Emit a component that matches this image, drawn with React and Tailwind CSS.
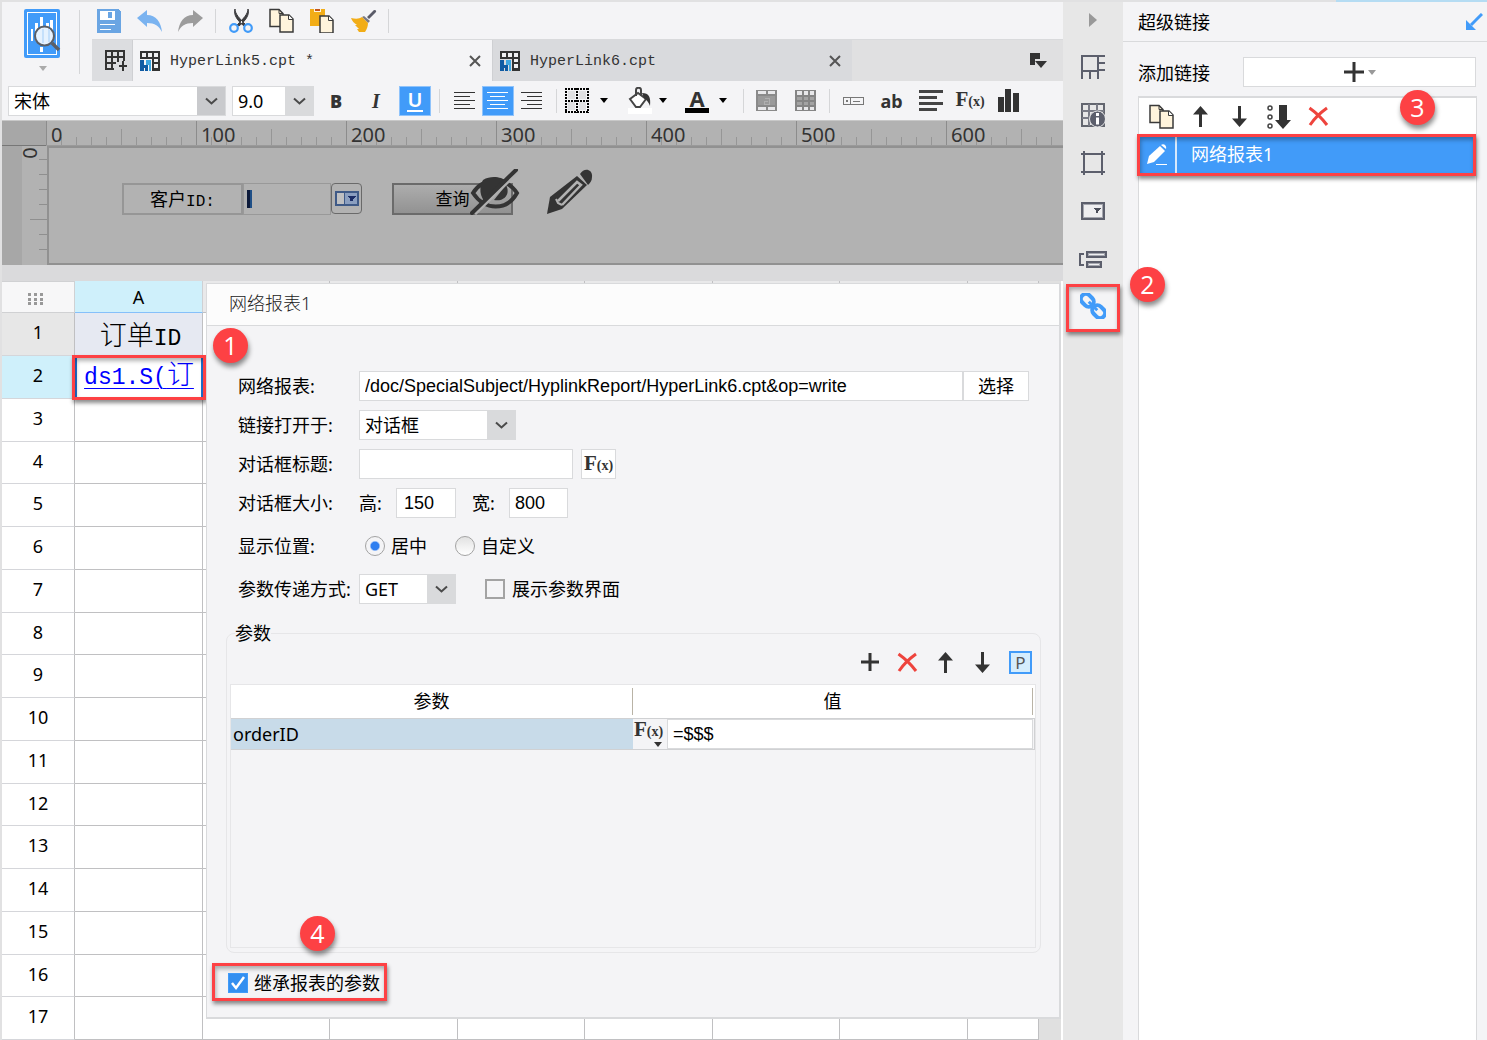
import React from "react";

const SONG = "font-['Liberation_Mono','Noto_Sans_CJK_SC',monospace]";
const ARIAL = "font-['Liberation_Sans','Noto_Sans_CJK_SC',sans-serif]";

/* ---------- icons ---------- */

const Svg = ({ w, h, children, className = "", crisp }) => (
  <svg
    width={w}
    height={h}
    viewBox={`0 0 ${w} ${h}`}
    fill="none"
    aria-hidden="true"
    shapeRendering={crisp ? "crispEdges" : "auto"}
    className={`shrink-0 ${className}`}
  >
    {children}
  </svg>
);

const PreviewIcon = () => (
  <Svg w={37} h={50}>
    <rect width="36" height="49" rx="2" fill="#419bf9" />
    <rect x="3.5" y="3.5" width="29" height="42" stroke="#fff" />
    <path d="M7 20h2v12H7zM11 14h3v18h-3zM16 8h3v10h-3zM22 14h3v4h-3zM26 11h3v16h-3zM16 38h3v5h-3z" fill="#fff" />
    <circle cx="20.500" cy="27" r="9.500" fill="#e6f2fe" stroke="#5b5f66" strokeWidth="2" />
    <path d="M18 20h2v14h-2zM24 20h2v13h-2z" fill="#c5e0fb" />
    <path d="M28 34l7 7" stroke="#5b5f66" strokeWidth="3.500" />
  </Svg>
);

const SaveIcon = () => (
  <Svg w={24} h={24} crisp>
    <path d="M0 0h21l3 3v21H0z" fill="#6aa5e3" />
    <path d="M3 2h15v9H3zM3 15h15v1H3zM3 20h11v1H3z" fill="#fff" />
    <path d="M11 3h4v6h-4z" fill="#6aa5e3" />
  </Svg>
);

const UndoIcon = () => (
  <Svg w={25} h={24}>
    <path d="M0 9L10 1v5c9 0 14 7 15 17-3-6-7-9-15-9v4z" fill="#7ab3f0" />
  </Svg>
);

const RedoIcon = () => (
  <Svg w={25} h={24}>
    <path d="M25 9L15 1v5C6 6 1 13 0 23c3-6 7-9 15-9v4z" fill="#9c9c9c" />
  </Svg>
);

const CutIcon = () => (
  <Svg w={24} h={24}>
    <path d="M6 0c0 5 5 10 11 16l-2 1C9 12 4 6 6 0zM19 0c0 5-5 10-11 16l2 1C16 12 21 6 19 0z" fill="#3d3d40" stroke="#3d3d40" />
    <circle cx="5" cy="19" r="3.800" stroke="#419bf9" strokeWidth="2.200" />
    <circle cx="19" cy="19" r="3.800" stroke="#419bf9" strokeWidth="2.200" />
  </Svg>
);

const CopyIcon = () => (
  <Svg w={26} h={25}>
    <path d="M1 1.500h9l4 4v13H1z" fill="#fff4dc" stroke="#3a3a3a" strokeWidth="1.500" />
    <path d="M10 1.500v4h4" stroke="#3a3a3a" />
    <path d="M11 7h9l4 4v13H11z" fill="#fff4dc" stroke="#3a3a3a" strokeWidth="1.500" />
    <path d="M19.500 7v4.500H24" fill="#fff" stroke="#3a3a3a" />
  </Svg>
);

const PasteIcon = () => (
  <Svg w={25} h={24}>
    <path d="M0 0h15v17H0z" fill="#f2ad17" />
    <path d="M4 0h7v3H4z" fill="#fff4dc" />
    <path d="M5 0h5v2H5z" fill="#c5561b" />
    <path d="M10 7h9l4 4v13H10z" fill="#fff4dc" stroke="#3a3a3a" strokeWidth="1.500" />
    <path d="M18.500 7v4.500H23" fill="#fff" stroke="#3a3a3a" />
  </Svg>
);

const BrushIcon = () => (
  <Svg w={26} h={24}>
    <path d="M16 8l6-6c1-2 4-1 3 1l-7 7z" fill="#5a5b68" />
    <path d="M13 7l6 5-2 2-6-6z" fill="#7a7b86" />
    <path d="M0 9c5 1 8 1 11-1l6 6c0 3-1 6-3 9H8l-2-3h2l-4-4h2C3 14 1 12 0 9z" fill="#f2ad17" />
  </Svg>
);

const NewGridIcon = () => (
  <Svg w={22} h={21} crisp>
    <path d="M0 0h20v11h-2V8H2v10h7v2H0z" fill="#333" />
    <path d="M2 2h4v4H2zM8 2h4v4H8zM14 2h4v4h-4zM2 8h4v4H2zM8 8h4v4H8zM2 14h4v4H2z" fill="#dcdde0" />
    <path d="M6 6h2v14H6zM2 12h9v2H2z" fill="#333" />
    <path d="M12 8h2v4h-2zM14 15h8v2h-8zM17 11h2v10h-2z" fill="#333" />
  </Svg>
);

const FileIcon = () => (
  <Svg w={20} h={20} crisp>
    <path d="M0 0h20v20h-8V8H0z" fill="#333" />
    <path d="M2 2h4v4H2zM8 2h4v4H8zM14 2h4v4h-4zM14 8h4v3h-4zM14 13h4v4h-4z" fill="#f0f0f2" />
    <path d="M0 9h4v5h4v6H5v-3H4v3H0z" fill="#0f5ba3" />
    <path d="M6 9h5v11H9v-6H6z" fill="#3ea6e0" />
  </Svg>
);

const CloseIcon = () => (
  <Svg w={12} h={12}>
    <path d="M1 1l10 10M11 1L1 11" stroke="#555" strokeWidth="2" />
  </Svg>
);

const TabMenuIcon = () => (
  <Svg w={17} h={15}>
    <path d="M0 0h10v6H5v6H0z" fill="#333" />
    <path d="M5 8h12l-6 7z" fill="#333" />
  </Svg>
);

const Chevron = () => (
  <Svg w={13} h={8}>
    <path d="M1 1.500l5.500 5 5.500-5" stroke="#4a4a4a" strokeWidth="2" />
  </Svg>
);

const Caret = ({ className = "text-black" }) => (
  <Svg w={8} h={5} className={className}>
    <path d="M0 0h8L4 5z" fill="currentColor" />
  </Svg>
);

const Lines = ({ widths, align, color, w = 22, t = 1, gap = 3 }) => (
  <Svg w={w} h={widths.length * (gap + t)} crisp>
    {widths.map((n, i) => (
      <rect
        key={i}
        x={align === "left" ? 0 : align === "right" ? w - n : Math.floor((w - n) / 2)}
        y={1 + i * (gap + t)}
        width={n}
        height={t}
        fill={color}
      />
    ))}
  </Svg>
);

const BorderIcon = () => (
  <Svg w={24} h={25} crisp>
    <rect x="3" y="3" width="7" height="8" fill="#e0e0e2" />
    <rect x="14" y="3" width="7" height="8" fill="#e0e0e2" />
    <rect x="3" y="14" width="7" height="8" fill="#e0e0e2" />
    <rect x="14" y="14" width="7" height="8" fill="#e0e0e2" />
    <path d="M0 1h24M0 24h24M0 12.500h24M1 0v25M23 0v25M12 0v25" stroke="#000" strokeWidth="2" strokeDasharray="2 1" />
  </Svg>
);

const BucketIcon = () => (
  <Svg w={25} h={27}>
    <path d="M0 21h24v6H0z" fill="#fff" />
    <path d="M2 12l8-6 8 6-6 8H8z" fill="#fff" stroke="#444" strokeWidth="2" />
    <path d="M8 9V3c0-3 5-3 5 0v6" stroke="#444" strokeWidth="2" />
    <path d="M14 6c7 0 9 4 8 13-1-3-3-6-6-8z" fill="#333" />
  </Svg>
);

const MergeIcon = () => (
  <Svg w={21} h={21} crisp>
    <path d="M0 0h21v21H0z" fill="#8a8a8a" />
    <path d="M2 1h8v3H2zM12 1h7v3h-7zM2 17h8v3H2zM12 17h7v3h-7z" fill="#e8e8ea" />
    <path d="M2 6h17v9H2z" fill="#9a9a9a" />
    <path d="M9 8h4v6H8v-3h4" stroke="#b0b0b0" />
  </Svg>
);

const SplitIcon = () => (
  <Svg w={21} h={21} crisp>
    <path d="M0 0h21v21H0z" fill="#858585" />
    <path d="M2 1h5v4H2zM9 1h4v4H9zM15 1h4v4h-4zM2 17h5v3H2zM9 17h4v3H9zM15 17h4v3h-4z" fill="#e8e8ea" />
    <path d="M2 7h5v3H2zM9 7h4v3H9zM15 7h4v3h-4zM2 12h5v3H2zM9 12h4v3H9zM15 12h4v3h-4z" fill="#a3a3a3" />
  </Svg>
);

const WidgetIcon = () => (
  <Svg w={21} h={8} crisp>
    <path d="M.5.500h20v7H.500zM7.500.500v7M10 4h7" stroke="#777" />
    <path d="M3 3h2v2H3z" fill="#777" />
  </Svg>
);

const ChartIcon = () => (
  <Svg w={21} h={23} crisp>
    <path d="M0 8h6v15H0zM7 0h6v23H7zM15 4h6v19h-6z" fill="#333" />
  </Svg>
);

const Fx = () => (
  <span className="inline-flex items-baseline font-['Liberation_Serif',serif] leading-5 text-[#333]">
    <span className="text-[21px] font-bold">F</span>
    <span className="text-[14px] font-bold">(x)</span>
  </span>
);

const DeleteIcon = () => (
  <Svg w={21} h={21}>
    <path d="M1.500 2c7 5 13 11 17.500 17M19 2C12 7 6 13 2 19" stroke="#ee443d" strokeWidth="3" />
  </Svg>
);

const UpIcon = () => (
  <Svg w={15} h={21}>
    <path d="M7.500 0L15 8.500H9V21H6V8.500H0z" fill="#333" />
  </Svg>
);

const DownIcon = () => (
  <Svg w={15} h={21}>
    <path d="M7.500 21L0 12.500h6V0h3v12.500h6z" fill="#333" />
  </Svg>
);

const PlusIcon = ({ size }) => (
  <Svg w={size} h={size}>
    <path d={`M0 ${size / 2}h${size}M${size / 2} 0v${size}`} stroke="#333" strokeWidth="3" />
  </Svg>
);

const SortIcon = () => (
  <Svg w={24} h={24}>
    <circle cx="3" cy="3" r="2" stroke="#444" strokeWidth="1.500" />
    <circle cx="3" cy="12" r="2" stroke="#444" strokeWidth="1.500" />
    <circle cx="3" cy="21" r="2" stroke="#444" strokeWidth="1.500" />
    <path d="M12 0h8v15h4l-8 9-8-9h4z" fill="#333" />
  </Svg>
);

const HiddenEyeIcon = () => (
  <Svg w={50} h={46}>
    <path d="M3 24C12 9 36 7 47 24 37 42 15 42 3 24z" stroke="#343434" strokeWidth="4" />
    <path d="M13 11c8-5 19-3 23 1L17 35c-8-7-8-17-4-24z" fill="#343434" />
    <path d="M24 31l12-15c5 9-2 17-12 15z" fill="#343434" />
    <path d="M5 45L49 2" stroke="#b0b0b0" strokeWidth="3" />
    <path d="M2 44L46 1" stroke="#343434" strokeWidth="4" strokeLinecap="round" />
  </Svg>
);

const PencilIcon = () => (
  <Svg w={46} h={46}>
    <path d="M0 45l3-17L30 7l10 9-25 24z" fill="#343434" />
    <path d="M33 5c4-7 13-5 12 3 0 4-2 6-4 8z" fill="#343434" />
    <path d="M11 32L30 13l4 3-19 20" stroke="#b2b2b2" strokeWidth="2.500" />
    <path d="M9 30l2 4 4 2" stroke="#b2b2b2" strokeWidth="2" />
  </Svg>
);

const EditIcon = () => (
  <Svg w={22} h={22}>
    <path d="M1 20l2-8L14 2l5 5L8 18z" fill="#fff" />
    <path d="M15 1c3-2 6 1 5 4z" fill="#fff" />
    <path d="M10 20.500h11" stroke="#fff" />
  </Svg>
);

const ComboWidgetIcon = () => (
  <Svg w={24} h={15} crisp>
    <path d="M1 1h22v13H1z" fill="#bfc0c2" stroke="#3f5a87" strokeWidth="2" />
    <path d="M10 2h12v11H10z" fill="#8b9fc0" />
    <path d="M9 1v13" stroke="#3f5a87" />
    <path d="M12 5h9l-3 3v2h-3V8z" fill="#1b2d66" />
  </Svg>
);

const CellIcon = () => (
  <Svg w={24} h={24} crisp>
    <path d="M1 1h16v15H1zM17 1h7M17 8h7M17 15h7M1 16v8M9 16v8M17 16v8" stroke="#5c5f6c" strokeWidth="2" />
  </Svg>
);

const CellInfoIcon = () => (
  <Svg w={24} h={24}>
    <path d="M1 1h22v22H1z" stroke="#63666f" strokeWidth="2" />
    <path d="M1 8h22M1 15h9M8 1v22M16 1v8" stroke="#7a7c86" strokeWidth="2" />
    <circle cx="16.500" cy="16" r="8" fill="#5c5f6c" stroke="#e7e7e7" />
    <path d="M15 10h3v3h-3zM15 14.500h3v7h-3z" fill="#fff" />
  </Svg>
);

const FrameIcon = () => (
  <Svg w={24} h={24} crisp>
    <path d="M3 0v24M21 0v24M0 3h24M0 21h24" stroke="#5c5f6c" strokeWidth="2" />
  </Svg>
);

const SelectBoxIcon = () => (
  <Svg w={24} h={18} crisp>
    <path d="M1 1h22v16H1z" stroke="#5c5f6c" strokeWidth="2" />
    <path d="M2 2h20v14H2z" fill="#a5a7af" />
    <path d="M3 3h18v12H3z" fill="#eeeef0" />
    <path d="M12 6h8l-3 3v2h-2V9z" fill="#4a4d59" />
  </Svg>
);

const StackIcon = () => (
  <Svg w={28} h={19} crisp>
    <path d="M5 4H1v11h4" stroke="#5c5f6c" strokeWidth="2" />
    <path d="M8 2h19v5H8zM8 12h14v5H8z" fill="#a5a7af" stroke="#5c5f6c" strokeWidth="2" />
    <path d="M10 4h15v1H10zM10 14h10v1H10z" fill="#f0f0f2" />
  </Svg>
);

const LinkIcon = () => (
  <Svg w={26} h={26}>
    <g transform="rotate(45 13 13)" stroke="#419bf9" strokeWidth="4">
      <rect x="-2" y="8" width="14" height="10" rx="5" />
      <rect x="14" y="8" width="14" height="10" rx="5" />
      <path d="M7 13h12" strokeWidth="3" />
    </g>
  </Svg>
);

const DockIcon = () => (
  <Svg w={17} h={17}>
    <path d="M16 1L5 12" stroke="#419bf9" strokeWidth="3" />
    <path d="M0 7v10h10z" fill="#419bf9" />
  </Svg>
);

/* ---------- shared parts ---------- */

const Badge = ({ n, className }) => (
  <span
    className={`absolute z-20 flex size-[35px] items-center justify-center rounded-full bg-[#fd4144] pb-px font-['Open_Sans',sans-serif] text-[25px] leading-none font-medium text-white shadow-[1px_4px_5px_rgba(0,0,0,0.45)] ${className}`}
  >
    {n}
  </span>
);

const Marker = ({ className }) => (
  <span
    className={`pointer-events-none absolute z-10 border-3 border-[#fd4144] shadow-[1px_3px_4px_rgba(0,0,0,0.45),inset_1px_3px_4px_rgba(0,0,0,0.3)] ${className}`}
  />
);

const Sep = ({ className }) => <span className={`w-px shrink-0 bg-[#d5d6d8] ${className}`} />;

const Tool = ({ label, className, children }) => (
  <button type="button" aria-label={label} className={`flex shrink-0 items-center justify-center ${className}`}>
    {children}
  </button>
);

const Combo = ({ label, options, id, className, arrow = "bg-[#d9dadc]" }) => (
  <div className={`relative h-[30px] shrink-0 border border-[#d9dadc] bg-white ${className}`}>
    <select id={id} aria-label={label} className="h-full w-full appearance-none bg-transparent pl-[5px] text-[18px] leading-7 outline-none">
      {options.map((o) => (
        <option key={o}>{o}</option>
      ))}
    </select>
    <span className={`pointer-events-none absolute inset-y-0 right-0 flex w-7 items-center justify-center ${arrow}`}>
      <Chevron />
    </span>
  </div>
);

/* ---------- top area ---------- */

const Toolbar = () => (
  <div className="flex h-[37px] items-center pl-1">
    <Tool label="保存" className="w-[25px]"><SaveIcon /></Tool>
    <Tool label="撤销" className="ml-4 w-[25px]"><UndoIcon /></Tool>
    <Tool label="重做" className="ml-4 w-[25px]"><RedoIcon /></Tool>
    <Sep className="mx-3 h-6" />
    <Tool label="剪切" className="w-[25px]"><CutIcon /></Tool>
    <Tool label="复制" className="ml-4 w-[25px]"><CopyIcon /></Tool>
    <Tool label="粘贴" className="ml-4 w-[25px]"><PasteIcon /></Tool>
    <Tool label="格式刷" className="ml-4 w-[25px]"><BrushIcon /></Tool>
    <Sep className="mx-3 h-6" />
  </div>
);

const Tab = ({ name, active }) => (
  <div className={`flex w-[360px] shrink items-center gap-[10px] border-l border-[#cfd0d3] pr-[11px] pl-[7px] ${active ? "bg-[#f4f4f6]" : "bg-[#d9dadd]"}`}>
    <FileIcon />
    <span className={`flex-1 pt-[2px] text-[15px] text-[#333] ${SONG}`}>{name}</span>
    <Tool label="关闭" className=""><CloseIcon /></Tool>
  </div>
);

const FormatBar = () => (
  <div className="flex h-[39px] items-center pl-[6px]">
    <Combo label="字体" options={["宋体"]} className="w-[218px]" arrow="bg-[#c9cacd]" />
    <Combo label="字号" options={["9.0"]} className="ml-[6px] w-[82px]" />
    <Tool label="加粗" className="ml-[7px] w-[30px] font-['Open_Sans',sans-serif] text-[18px] font-extrabold text-[#333]">B</Tool>
    <Tool label="倾斜" className="ml-[10px] w-[30px] font-['Liberation_Serif',serif] text-[20px] font-bold italic text-[#333]">I</Tool>
    <Tool label="下划线" className="ml-2 h-[30px] w-8 border border-[#8fc3fb] bg-[#419bf9] text-[20px] font-semibold text-white">
      <span className="border-b-2 border-white px-px leading-5">U</span>
    </Tool>
    <Sep className="mx-2 h-6" />
    <Tool label="左对齐" className="ml-[6px] w-[22px]"><Lines widths={[21, 16, 21, 16, 21]} align="left" color="#333" /></Tool>
    <Tool label="居中对齐" className="ml-[6px] h-[30px] w-8 border border-[#8fc3fb] bg-[#419bf9]">
      <Lines widths={[21, 15, 21, 15, 21]} align="center" color="#fff" />
    </Tool>
    <Tool label="右对齐" className="ml-[6px] w-[22px]"><Lines widths={[21, 15, 21, 15, 21]} align="right" color="#333" /></Tool>
    <Sep className="mr-2 ml-[14px] h-6" />
    <Tool label="边框" className="w-[43px] gap-[11px]"><BorderIcon /><Caret /></Tool>
    <Tool label="背景色" className="ml-5 w-[39px] gap-[6px]"><BucketIcon /><Caret /></Tool>
    <Tool label="字体颜色" className="ml-[18px] w-[42px] gap-[10px]">
      <span className="w-6 border-b-5 border-black text-center text-[22px] leading-[20px] font-bold text-[#333]">A</span>
      <Caret />
    </Tool>
    <Sep className="mr-3 ml-4 h-6" />
    <Tool label="合并单元格" className="w-[21px]"><MergeIcon /></Tool>
    <Tool label="取消合并" className="ml-[18px] w-[21px]"><SplitIcon /></Tool>
    <Sep className="mr-[13px] ml-[13px] h-6" />
    <Tool label="控件" className="w-[21px]"><WidgetIcon /></Tool>
    <Tool label="文本" className="ml-4 w-[23px] text-[18px] font-bold text-[#333]">ab</Tool>
    <Tool label="富文本" className="ml-4 w-6"><Lines widths={[24, 18, 24, 18]} w={24} t={3} gap={3} align="left" color="#444" /></Tool>
    <Tool label="公式" className="ml-[13px] w-7"><Fx /></Tool>
    <Tool label="图表" className="ml-[14px] w-[21px]"><ChartIcon /></Tool>
  </div>
);

/* ---------- parameter canvas ---------- */

const Ruler = () => (
  <div className="flex h-[25px] min-w-0 flex-1 border-b border-[#9a9a9a]">
    {[0, 100, 200, 300, 400, 500, 600].map((n) => (
      <div key={n} className="relative w-[150px] shrink-0 border-l border-[#8c8c8c]">
        <Svg w={149} h={24} crisp className="absolute top-0 left-0">
          {[1, 2, 3, 4, 5, 6, 7, 8, 9].map((i) => (
            <path key={i} d={`M${i * 15 - 0.5} ${i === 5 ? 8 : 16}v17`} stroke="#969696" />
          ))}
        </Svg>
        <span className="relative block h-6 w-12 pl-1 text-[20px] leading-7 text-[#333]">{n}</span>
      </div>
    ))}
  </div>
);

const ParamCanvas = () => (
  <div className="overflow-hidden border-t border-[#c8c8c8] bg-[#b2b2b2]">
    <div className="flex">
      <div className="h-[25px] w-[44px] shrink-0 border-b border-[#777] bg-[#a7a7a7]" />
      <Ruler />
    </div>
    <div className="flex h-[119px]">
      <div className="w-5 shrink-0 bg-[#a7a7a7]" />
      <div className="relative w-[25px] shrink-0">
        <Svg w={25} h={119} crisp>
          {[14, 29, 44, 59, 74, 89, 104].map((y) => (
            <path key={y} d={`M${y === 74 ? 8 : 17} ${y - 0.5}h17`} stroke="#8f8f8f" />
          ))}
        </Svg>
        <span className="absolute top-0 left-[2px] -rotate-90 text-[20px] leading-[14px] text-[#333]">0</span>
      </div>
      <div className="relative flex-1 border-2 border-r-0 border-[#919191]">
        <label htmlFor="customer" className="absolute top-[35px] left-[73px] h-8 w-[121px] border-2 border-[#969696] text-center text-[18px] leading-7 text-black">
          客户<span className={`text-[16px] ${SONG}`}>ID:</span>
        </label>
        <input id="customer" className="absolute top-[35px] left-[194px] h-8 w-[88px] border border-[#999] bg-transparent outline-none" />
        <span className="absolute top-[42px] left-[198px] h-[18px] w-[5px] border-l-3 border-[#0c1a3a] bg-[#1f4f86]" />
        <button type="button" aria-label="下拉框" className="absolute top-[35px] left-[282px] flex h-[31px] w-[31px] items-center justify-center rounded-[4px] border border-[#6a6a6a]">
          <ComboWidgetIcon />
        </button>
        <button type="button" className="absolute top-[35px] left-[343px] h-8 w-[121px] border-2 border-[#6b6b6b] bg-linear-to-b from-[#adadad] to-[#929292] text-center text-[17px] leading-7 text-black">
          查询
        </button>
        <span className="absolute top-[21px] left-[421px]"><HiddenEyeIcon /></span>
        <span className="absolute top-[21px] left-[498px]"><PencilIcon /></span>
      </div>
    </div>
  </div>
);

/* ---------- hyperlink dialog ---------- */

const field = `h-[30px] border border-[#d9dadc] bg-white text-[18px] text-black outline-none ${ARIAL}`;

const Dialog = () => (
  <section className="absolute top-[2px] right-[2px] left-[204px] z-10 border border-r-2 border-b-2 border-[#d9dadc] bg-[#f4f4f6]">
    <h2 className="h-[42px] border-b border-[#d9dadc] bg-[#fcfcfc] pl-[22px] text-[18px] leading-[38px] font-light text-[#222]">网络报表1</h2>
    <div className="grid grid-cols-[121px_1fr] items-center gap-y-[9px] pt-[45px] pl-[31px]">
      <label htmlFor="report">网络报表:</label>
      <div className="flex pr-[30px]">
        <input id="report" defaultValue="/doc/SpecialSubject/HyplinkReport/HyperLink6.cpt&op=write" className={`${field} min-w-0 flex-1 pl-[5px]`} />
        <button type="button" className="h-[30px] w-[66px] border border-[#d9dadc] bg-white">选择</button>
      </div>

      <label htmlFor="target">链接打开于:</label>
      <Combo id="target" options={["对话框"]} className="w-[157px]" />

      <label htmlFor="title">对话框标题:</label>
      <div className="flex gap-2">
        <input id="title" className={`${field} w-[214px] pl-[5px]`} />
        <Tool label="公式" className="h-[30px] w-[35px] border border-[#d9dadc] bg-white"><Fx /></Tool>
      </div>

      <span>对话框大小:</span>
      <div className="flex items-center">
        <label htmlFor="height" className="w-[37px]">高:</label>
        <input id="height" defaultValue="150" className={`${field} w-[60px] pl-[7px]`} />
        <label htmlFor="width" className="ml-4 w-[37px]">宽:</label>
        <input id="width" defaultValue="800" className={`${field} w-[59px] pl-[5px]`} />
      </div>

      <span className="mt-1">显示位置:</span>
      <div className="mt-1 flex h-[30px] items-center gap-7 pl-[6px]">
        <label className="flex items-center gap-[6px]">
          <input type="radio" name="pos" defaultChecked className="size-5 appearance-none rounded-full border border-[#a3a3a3] bg-linear-to-b from-[#e2e2e2] to-white checked:bg-radial checked:from-[#2f7ff0] checked:from-30% checked:to-[#f4f4f6] checked:to-42%" />
          居中
        </label>
        <label className="flex items-center gap-[6px]">
          <input type="radio" name="pos" className="size-5 appearance-none rounded-full border border-[#a3a3a3] bg-linear-to-b from-[#e2e2e2] to-white" />
          自定义
        </label>
      </div>

      <label htmlFor="method" className="mt-1">参数传递方式:</label>
      <div className="mt-1 flex items-center">
        <Combo id="method" options={["GET"]} className="w-[97px]" />
        <label className="ml-[29px] flex items-center gap-[7px]">
          <input type="checkbox" className="size-5 appearance-none border-2 border-[#a3a3a3]" />
          展示参数界面
        </label>
      </div>
    </div>

    <fieldset className="mt-5 mr-[18px] ml-[19px] flex flex-col rounded-lg border border-[#e6e6e8] pr-1 pb-1 pl-[3px]">
      <legend className="ml-[5px] leading-[18px]">参数</legend>
      <div className="flex h-[42px] items-center justify-end gap-[17px] pr-1 pb-[2px]">
        <Tool label="添加" className="w-5"><PlusIcon size={18} /></Tool>
        <Tool label="删除" className="w-[21px]"><DeleteIcon /></Tool>
        <Tool label="上移" className="w-5"><UpIcon /></Tool>
        <Tool label="下移" className="w-5"><DownIcon /></Tool>
        <button type="button" className="size-[23px] border-2 border-[#419bf9] bg-[#d5edfd] text-[17px] leading-[19px] text-[#555]">P</button>
      </div>
      <div className="min-h-[264px] border border-[#e6e6e8]">
        <table className="w-full table-fixed border-separate border-spacing-0">
          <thead>
            <tr className="h-[33px] bg-white">
              <th className="font-normal"><div className="border-r border-[#b9b3a6] leading-[27px]">参数</div></th>
              <th className="font-normal"><div className="mr-[2px] border-r border-[#b9b3a6] leading-[27px]">值</div></th>
            </tr>
          </thead>
          <tbody>
            <tr>
              <td className="border-y border-[#d0d1d3] bg-[#c8dbe9] pl-[2px]">orderID</td>
              <td className="border-y border-r border-[#d0d1d3] p-0">
                <div className="flex pr-px">
                  <button type="button" aria-label="值类型" className="relative flex w-[34px] items-start pl-px"><Fx />
                    <span className="absolute right-[5px] bottom-[2px]"><Caret className="text-[#333]" /></span>
                  </button>
                  <input aria-label="值" defaultValue="=$$$" className={`${field} min-w-0 flex-1 pl-[5px]`} />
                </div>
              </td>
            </tr>
          </tbody>
        </table>
      </div>
    </fieldset>

    <div className="relative mt-[10px] mb-4 ml-[5px] flex h-[38px] w-[175px] items-center pt-[2px] pl-4">
      <Marker className="inset-0" />
      <Badge n={4} className="-top-[47px] left-[88px]" />
      <label className="flex items-center gap-[6px]">
        <span className="relative flex">
          <input type="checkbox" defaultChecked className="size-5 appearance-none border border-[#419bf9] bg-[#338ff0]" />
          <Svg w={20} h={20} className="pointer-events-none absolute inset-0">
            <path d="M4 10l4 5 8-11" stroke="#fff" strokeWidth="2.500" />
          </Svg>
        </span>
        继承报表的参数
      </label>
    </div>
  </section>
);

/* ---------- sheet ---------- */

const COLS = ["A", "B", "C", "D", "E", "F", "G", "H"];
const rowHeight = (r) => (r % 4 === 0 ? "h-[42px]" : "h-[43px]");

const Sheet = () => (
  <div className="relative flex flex-1 bg-white">
    <table className="min-w-0 flex-1 table-fixed border-separate border-spacing-0 self-start text-center">
      <colgroup>
        <col className="w-[73px]" />
        <col className="w-32" />
        <col className="w-[127px]" />
        <col className="w-32" />
        <col className="w-[127px]" />
        <col className="w-32" />
        <col className="w-[127px]" />
        <col className="w-32" />
        <col />
      </colgroup>
      <thead>
        <tr className="h-8">
          <th className="border-t border-r border-b border-[#d0d1d3] bg-[#f7f7f8] p-0 pr-[6px]">
            <Svg w={15} h={12} crisp className="mx-auto mt-1">
              {[0, 6, 12].map((x) => [0, 5, 9].map((y) => <rect key={`${x}-${y}`} x={x} y={y} width="3" height="3" fill="#999" />))}
            </Svg>
          </th>
          {COLS.map((c, i) => (
            <th
              key={c}
              className={`border-r border-b p-0 text-[18px] leading-7 font-normal ${i === 0 ? "border-r-[#cfd0d3] border-b-[#85c0fa] bg-[#cff0fb] text-black" : "border-[#c0c0c2] bg-[#e9e9ea]"}`}
            >
              {i === 0 ? c : null}
            </th>
          ))}
        </tr>
      </thead>
      <tbody>
        {Array.from({ length: 17 }, (_, k) => k + 1).map((r) => (
          <tr key={r} className={rowHeight(r)}>
            <th
              scope="row"
              className={`border-r border-b border-r-[#c0c0c2] border-b-[#d5d6da] p-0 pb-1 text-[18px] leading-6 font-normal text-black ${r === 1 ? "bg-[#e7e7e7]" : r === 2 ? "bg-[#cff0fb]" : "bg-white"}`}
            >
              {r}
            </th>
            {COLS.map((c) => {
              if (c === "A" && r === 1)
                return (
                  <td key={c} className="border-r border-b border-[#c0c0c2] bg-[#e6e9f2] p-0 pt-[6px] pl-1 text-[27px] leading-[32px] font-light whitespace-nowrap text-black">
                    订单<span className={`text-[23px] ${SONG}`}>ID</span>
                  </td>
                );
              if (c === "A" && r === 2)
                return (
                  <td key={c} className="relative border-2 border-[#1f72d2] p-0 pb-1 text-[27px] leading-[30px] font-light whitespace-nowrap">
                    <Marker className="-inset-x-[5px] -inset-y-[3px]" />
                    <Badge n={1} className="-top-[30px] left-[136px]" />
                    <a href="#ds1" className="text-[#0000ff] underline decoration-1 underline-offset-4">
                      <span className={`text-[23px] ${SONG}`}>ds1.S(</span>订
                    </a>
                  </td>
                );
              return <td key={c} className="border-r border-b border-[#c0c0c2] p-0" />;
            })}
          </tr>
        ))}
      </tbody>
    </table>
    <div className="mr-[2px] w-[22px] shrink-0 bg-[#e0e0e0]" />
    <Dialog />
  </div>
);

/* ---------- right side ---------- */

const Rail = () => (
  <nav className="flex w-[60px] shrink-0 flex-col bg-[#e7e7e7]">
    <Tool label="收起" className="mb-[5px] h-9">
      <Svg w={10} h={16}><path d="M1 1l8 7-8 7z" fill="#999" /></Svg>
    </Tool>
    <Tool label="单元格元素" className="h-12"><CellIcon /></Tool>
    <Tool label="单元格属性" className="h-12"><CellInfoIcon /></Tool>
    <Tool label="悬浮元素" className="h-12"><FrameIcon /></Tool>
    <Tool label="控件设置" className="h-12"><SelectBoxIcon /></Tool>
    <Tool label="条件属性" className="h-12"><StackIcon /></Tool>
    <div className="relative mx-[3px] mt-px h-12 bg-[#f4f4f6]">
      <Tool label="超级链接" className="h-full w-full pb-1"><LinkIcon /></Tool>
      <Marker className="inset-0" />
      <Badge n={2} className="-top-[17px] left-16" />
    </div>
  </nav>
);

const LinkPanel = () => (
  <aside className="flex w-[364px] shrink-0 flex-col bg-[#f4f4f6]">
    <div className="flex h-10 items-center justify-between border-b border-[#d9dadc] pr-1 pl-[15px]">
      <h1 className="text-[18px]">超级链接</h1>
      <Tool label="停靠" className=""><DockIcon /></Tool>
    </div>
    <div className="flex items-center gap-[33px] pt-[15px] pr-[11px] pl-[15px]">
      <span className="shrink-0 pt-[2px]">添加链接</span>
      <button type="button" aria-label="添加链接" className="flex h-[30px] flex-1 items-center justify-center gap-1 border border-[#d9dadc] bg-white">
        <PlusIcon size={20} />
        <Caret className="text-[#999]" />
      </button>
    </div>
    <div className="mt-[9px] mr-[10px] ml-[15px] flex-1 border border-t-2 border-b-0 border-[#d9dadc] bg-white">
      <div className="relative flex h-[37px] items-center pl-[10px]">
        <Tool label="复制" className="w-[26px]"><CopyIcon /></Tool>
        <Tool label="上移" className="ml-[18px] w-[15px]"><UpIcon /></Tool>
        <Tool label="下移" className="ml-6 w-[15px]"><DownIcon /></Tool>
        <Tool label="排序" className="ml-5 w-6"><SortIcon /></Tool>
        <Tool label="删除" className="ml-[17px] w-[21px]"><DeleteIcon /></Tool>
        <Badge n={3} className="-top-2 left-[261px]" />
      </div>
      <div className="relative flex h-10 items-center bg-[#419bf9] text-white">
        <Marker className="-inset-y-px right-0 -left-[2px]" />
        <span className="flex h-full w-[38px] items-center justify-center border-r-2 border-[#d7e9fc]"><EditIcon /></span>
        <a href="#report1" className="pb-[2px] pl-[14px] text-[18px]">网络报表1</a>
      </div>
    </div>
  </aside>
);

export default function App() {
  return (
    <div className="flex min-h-screen flex-col bg-[#e1e1e2] pl-[2px] font-['Noto_Sans','Noto_Sans_CJK_SC',sans-serif] text-[18px] leading-6 text-black">
      <div className="flex h-[2px] justify-end">
        <span className="w-[151px] bg-[#b5dcf3]" />
      </div>
      <div className="flex flex-1">
        <main className="flex min-w-0 flex-1 flex-col bg-[#f4f4f6]">
          <div className="flex">
            <div className="flex w-[90px] shrink-0 pl-[22px]">
              <button type="button" aria-label="预览" className="flex flex-col items-center gap-[7px] pt-[7px]">
                <PreviewIcon />
                <Caret className="text-[#aaa]" />
              </button>
              <Sep className="mt-2 ml-[18px] h-16" />
            </div>
            <div className="min-w-0 flex-1">
              <Toolbar />
              <div className="flex h-[42px] border-t border-[#d9dadc] bg-[#e0e0e1]">
                <Tool label="新建" className="w-[40px] bg-[#dcdde0] pl-2"><NewGridIcon /></Tool>
                <Tab name="HyperLink5.cpt *" active />
                <Tab name="HyperLink6.cpt" />
                <Tool label="标签列表" className="mr-4 ml-auto"><TabMenuIcon /></Tool>
              </div>
            </div>
          </div>
          <FormatBar />
          <ParamCanvas />
          <div className="h-4 bg-[#dadadc]" />
          <Sheet />
        </main>
        <Rail />
        <LinkPanel />
      </div>
    </div>
  );
}
